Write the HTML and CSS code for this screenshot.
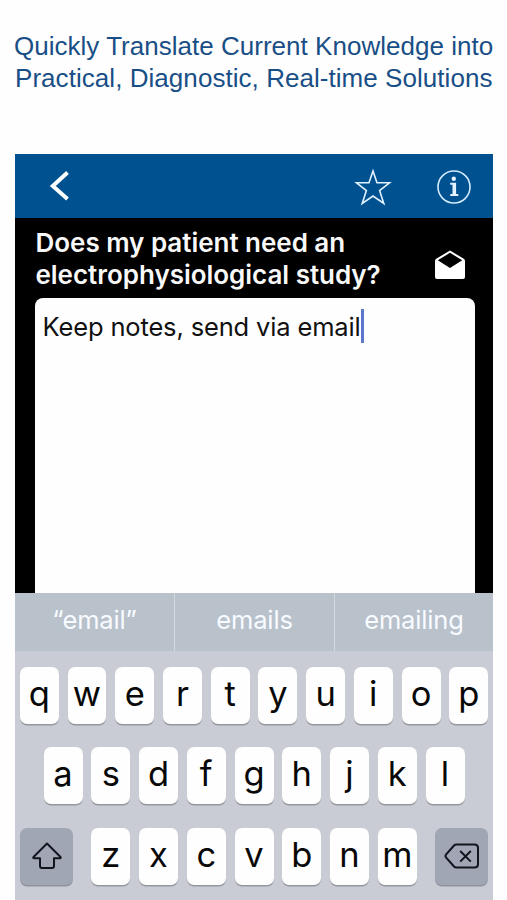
FILE: index.html
```html
<!DOCTYPE html>
<html lang="en">
<head>
<meta charset="utf-8">
<title>Notes</title>
<link rel="stylesheet" href="styles.css">
</head>
<body>
<h1 class="headline"><span class="line headline-first">Quickly Translate Current Knowledge into</span><span class="line headline-second">Practical, Diagnostic, Real-time Solutions</span></h1>
<main class="phone">
  <header class="bar">
    <svg class="back" width="24" height="34" viewBox="0 0 24 34"><path d="M20.500 3.500 5.800 17l14.700 13" fill="none" stroke="#fff" stroke-width="4"/></svg>
    <svg class="star" width="38" height="38" viewBox="0 0 38 38"><path d="M19 3 23 14.8 35.5 14.8 25.6 22.5 29.8 35.5 19 28 8.2 35.5 12.4 22.5 2.5 14.8 15 14.8Z" fill="none" stroke="#e0f1ff" stroke-width="1.6"/></svg>
    <svg class="info" width="36" height="36" viewBox="0 0 36 36"><circle cx="18" cy="18" r="16" fill="none" stroke="#d5eaff" stroke-width="1.6"/><circle cx="17.8" cy="9.800" r="2.2" fill="#e4f2ff"/><path d="M14.200 13.800h5.900v11.200h2.200v2h-8v-2h2.200v-9.200h-2.300z" fill="#e4f2ff"/></svg>
  </header>
  <section class="topic">
    <h2 class="question"><span class="line question-first">Does my patient need an</span><span class="line question-second">electrophysiological study?</span></h2>
    <svg class="mail" width="32" height="30" viewBox="0 0 32 30"><path d="M16 .5 29.800 8.800Q31 9.600 31 11V27q0 2-2 2H3q-2 0-2-2V11Q1 9.600 2.200 8.800Z" fill="#fff"/><path d="M16 2.800 28.200 10.300 16 18 3.800 10.300Z" fill="#000"/></svg>
  </section>
  <section class="notes"><p class="note"><span class="note-text">Keep notes, send via email</span><span class="caret"></span></p></section>
  <section class="suggestions">
    <span class="suggestion">“email”</span><span class="suggestion">emails</span><span class="suggestion">emailing</span>
  </section>
  <section class="keyboard">
    <div class="row"><span class="key">q</span><span class="key">w</span><span class="key">e</span><span class="key">r</span><span class="key">t</span><span class="key">y</span><span class="key">u</span><span class="key">i</span><span class="key">o</span><span class="key">p</span></div>
    <div class="row"><span class="key">a</span><span class="key">s</span><span class="key">d</span><span class="key">f</span><span class="key">g</span><span class="key">h</span><span class="key">j</span><span class="key">k</span><span class="key">l</span></div>
    <div class="row row-wide">
      <span class="key key-dark"><svg width="32" height="30" viewBox="0 0 32 30"><path d="M16 2.5 29.5 16q.8 1.2-.7 1.2H23V25q0 2-2 2H11q-2 0-2-2V17.200H3.200q-1.500 0-.7-1.200Z" fill="none" stroke="#11151d" stroke-width="2" stroke-linejoin="round"/></svg></span>
      <div class="row"><span class="key">z</span><span class="key">x</span><span class="key">c</span><span class="key">v</span><span class="key">b</span><span class="key">n</span><span class="key">m</span></div>
      <span class="key key-dark"><svg width="36" height="28" viewBox="0 0 36 28"><path d="M12.500 2.500H30.500Q34 2.500 34 6V22Q34 25.500 30.500 25.500H12.500Q11 25.500 10 24.500L2 15.500Q1 14 2 12.500L10 3.500Q11 2.500 12.500 2.500ZM16.200 9 26.800 19.600M26.800 9 16.200 19.600" fill="none" stroke="#11151d" stroke-width="2"/></svg></span>
    </div>
  </section>
</main>
</body>
</html>
```

FILE: styles.css
```css
* { box-sizing: border-box; }
body { margin: 0; height: 900px; overflow: hidden; background: #fefefe; font-family: Inter, "Liberation Sans", sans-serif; }
svg { display: block; flex: none; }
.line { display: block; width: max-content; }
.headline { margin: 0; padding: 31px 0 0 14px; height: 154px; font: 400 26px/31.5px "Liberation Sans", sans-serif; color: #194f86; white-space: nowrap; letter-spacing: .02px; }
.headline-second { margin-left: 1px; letter-spacing: .05px; }
.phone { margin-left: 15px; width: 478px; height: 746px; background: #000; }
.bar { height: 63.5px; background: #00518f; display: flex; padding-left: 31.5px; }
.back { margin: 15px 0 0; }
.star { margin: 14px 0 0 283.500px; }
.info { margin: 14.5px 0 0 43.500px; }
.topic { height: 80.500px; display: flex; padding: 9px 0 0 20.500px; }
.question { margin: 0; width: 398px; font-size: 26px; line-height: 32px; font-weight: 600; color: #f8f8f8; white-space: nowrap; letter-spacing: -.03px; }
.mail { margin-top: 23.500px; }
.notes { margin-left: 20px; width: 440px; height: 295px; border-radius: 8px 8px 0 0; background: #fefefe; padding: 11px 0 0 7.500px; }
.note { margin: 0; height: 34px; display: flex; font-size: 25.5px; line-height: 35px; color: #111; white-space: nowrap; letter-spacing: -.15px; }
.caret { width: 3px; height: 34px; background: #5d77cc; }
.suggestions { height: 57.500px; display: grid; grid-template-columns: 159px 160px 159px; background: #b9c1cb; }
.suggestion { text-align: center; font-size: 25.5px; line-height: 53px; color: #f8fbff; letter-spacing: -.15px; }
.suggestion + .suggestion { border-left: 1px solid #d3d8df; }
.keyboard { height: 249.500px; padding: 16px 4.750px 0; background: #caccd5; display: flex; flex-direction: column; gap: 23.5px; }
.row { display: flex; justify-content: center; gap: 8.750px; }
.row-wide { justify-content: space-between; }
.key { width: 39px; height: 57px; border-radius: 7px; background: #fefefe; box-shadow: 0 1.5px 0 #95979d; text-align: center; font-size: 34.5px; line-height: 53px; font-weight: 370; color: #080808; }
.key-dark { width: 53.5px; background: #a0a6b3; box-shadow: 0 1.5px 0 #90949d; display: flex; align-items: center; justify-content: center; }
```
